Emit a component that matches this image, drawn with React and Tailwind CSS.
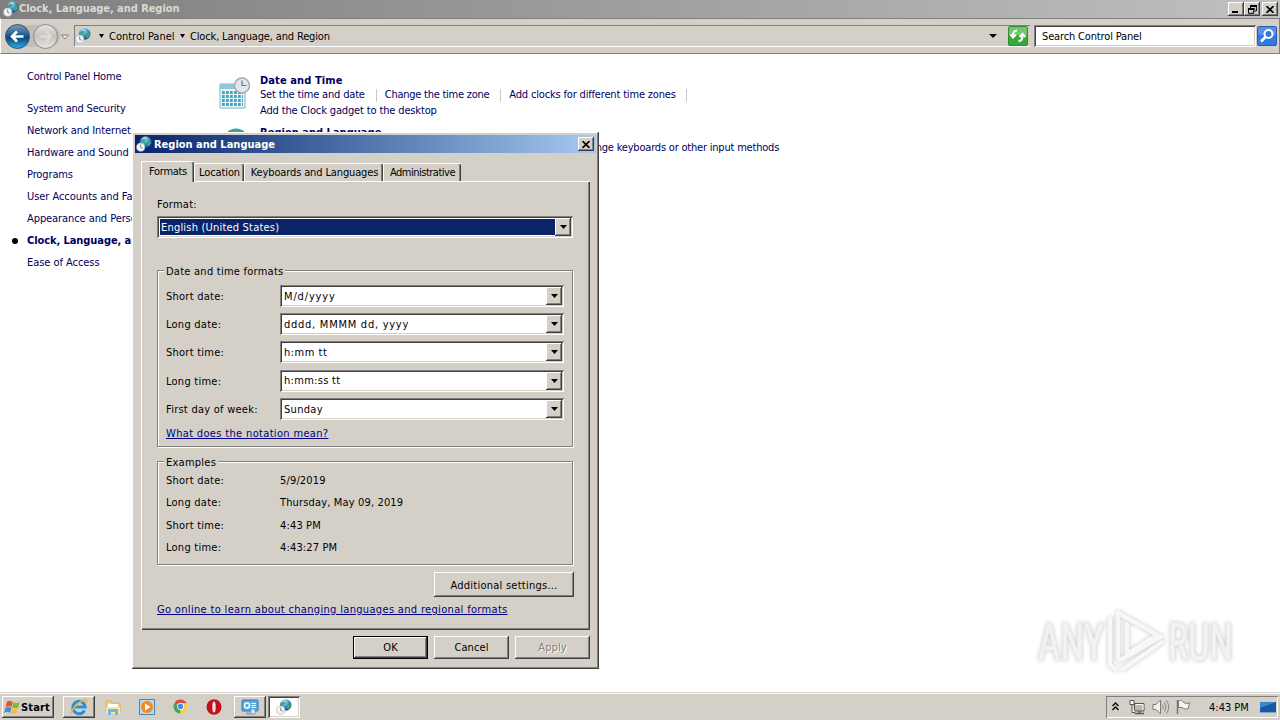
import React from 'react';

const raised =
  'bg-[#d4d0c8] shadow-[inset_-1px_-1px_#404040,inset_1px_1px_#fff,inset_-2px_-2px_#808080]';
const sunken =
  'shadow-[inset_1px_1px_#808080,inset_-1px_-1px_#fff,inset_2px_2px_#404040,inset_-2px_-2px_#d4d0c8]';

const GlobeClock = ({ className = '' }) => (
  <svg viewBox="0 0 16 16" className={`h-4 w-4 shrink-0 ${className}`}>
    <defs>
      <radialGradient id="globe" cx="0.4" cy="0.25" r="0.8">
        <stop offset="0" stopColor="#d5f1f8" />
        <stop offset="0.4" stopColor="#4a9fcf" />
        <stop offset="1" stopColor="#0c3f86" />
      </radialGradient>
    </defs>
    <circle cx="9.7" cy="6" r="5.8" fill="url(#globe)" />
    <path d="M6 3.5l2.500-.7 1.500 1-1.200 1.700-2 .3-1.500 1.500-.3-1.500zM11 6.500l3.600-1.500.3 2.500-2.300 3-1.600-1.500z" fill="#3fa768" />
    <circle cx="4.700" cy="11.200" r="4.100" fill="#f2f5f7" stroke="#a9b6be" strokeWidth="0.700" />
    <path d="M4.700 8.600v2.800l1.900.8" fill="none" stroke="#66747d" strokeWidth="0.900" />
  </svg>
);

const Arrow = ({ className = 'w-[7px]' }) => (
  <svg viewBox="0 0 7 4" preserveAspectRatio="none" className={`h-1 shrink-0 ${className}`}>
    <path d="M0 0h7L3.5 4z" fill="#000" />
  </svg>
);

const CloseGlyph = () => (
  <svg viewBox="0 0 8 7" className="h-[7px] w-2">
    <path d="M.5 0l7 7M7.5 0l-7 7" stroke="#000" strokeWidth="1.6" />
  </svg>
);

const TitleBar = () => (
  <header className="flex h-[18px] items-center bg-linear-to-r from-[#7f7f7f] to-[#c0c0c0] pl-[3px] pr-[2px]">
    <GlobeClock />
    <span className="flex-1 pt-px text-[11px] font-bold tracking-[-0.05px] text-[#dcd9d2]">
      Clock, Language, and Region
    </span>
    <div className="flex items-center">
      <div className={`flex h-[14px] w-4 items-end pb-[3px] pl-1 ${raised}`}>
        <span className="h-[2px] w-[6px] bg-black" />
      </div>
      <div className={`flex h-[14px] w-4 items-center justify-center ${raised}`}>
        <svg viewBox="0 0 9 9" className="h-[9px] w-[9px]">
          <path d="M2.5 3V.9h5.9V6H6.5" fill="none" stroke="#000" />
          <path d="M2 1h7M0 4h6.5" stroke="#000" strokeWidth="1.8" />
          <path d="M.5 3.5h5.2v4.8H.5z" fill="none" stroke="#000" />
        </svg>
      </div>
      <div className={`ml-[2px] flex h-[14px] w-4 items-center justify-center ${raised}`}>
        <CloseGlyph />
      </div>
    </div>
  </header>
);

const NavButtons = () => (
  <svg viewBox="0 0 68 28" className="h-7 w-[68px] shrink-0">
    <defs>
      <linearGradient id="back" x1="0" y1="0" x2="0" y2="1">
        <stop offset="0" stopColor="#7d9cb8" />
        <stop offset="0.45" stopColor="#1f5c93" />
        <stop offset="0.55" stopColor="#0b4780" />
        <stop offset="1" stopColor="#2fb0e6" />
      </linearGradient>
      <linearGradient id="fwd" x1="0" y1="0" x2="0" y2="1">
        <stop offset="0" stopColor="#e6e4e0" />
        <stop offset="0.5" stopColor="#c5c2bd" />
        <stop offset="1" stopColor="#e9e7e3" />
      </linearGradient>
    </defs>
    <rect x="4" y="3" width="54" height="22" rx="11" fill="#c2beb7" />
    <circle cx="15.500" cy="14.500" r="12" fill="url(#back)" stroke="#34516e" />
    <path d="M21.500 14.500h-11M15 9.500l-5 5 5 5" fill="none" stroke="#fff" strokeWidth="2.600" />
    <circle cx="43.500" cy="14.500" r="12" fill="url(#fwd)" stroke="#8d8a86" />
    <path d="M37.500 14.500h11M44 9.500l5 5-5 5" fill="none" stroke="#dedbd6" strokeWidth="2.400" />
    <path d="M59.500 13h7L63 17z" fill="#f5f3f0" stroke="#77746f" strokeWidth="0.900" />
  </svg>
);

const AddressBar = () => (
  <div className="flex h-9 items-center border border-[#808080] border-l-white bg-[#d4d0c8] pr-[2px] pl-[1px] text-[11px]">
    <NavButtons />
    <div className="ml-1 flex h-[22px] flex-1 items-center border-t border-b border-l border-[#808080] border-b-white">
      <GlobeClock className="-mt-px" />
      <Arrow className="ml-2 w-[5px]" />
      <span className="ml-[5px] w-[65px] pt-[2px] whitespace-nowrap">Control Panel</span>
      <Arrow className="ml-[6px] w-[5px]" />
      <span className="ml-[5px] flex-1 pt-[2px] tracking-[-0.15px]">Clock, Language, and Region</span>
      <Arrow className="mr-[11px] w-2" />
      <svg viewBox="0 0 20 20" className="mr-[2px] h-5 w-5">
        <rect x="0.5" y="0.5" width="19" height="19" rx="1.5" fill="#38a838" stroke="#338a35" />
        <rect x="1" y="1" width="18" height="8" fill="#74c56c" />
        <path d="M9 4.500c-3 0-4 2-4 5M2.500 8.500L5 11.500l3-3M10.500 15c3 0 4-2 4-5M11.500 11l3-3 3 3" fill="none" stroke="#fff" strokeWidth="2" />
      </svg>
    </div>
    <div className={`ml-1 flex h-[22px] w-[222px] items-center bg-white pt-[2px] pl-2 tracking-[-0.15px] ${sunken}`}>
      <span>Search Control Panel</span>
    </div>
    <svg viewBox="0 0 20 20" className="ml-[1px] h-5 w-5">
      <rect x="0.500" y="0.500" width="19" height="19" rx="1.500" fill="#2f7be0" stroke="#2b5cae" />
      <rect x="1" y="1" width="18" height="8" fill="#5a8ee8" />
      <circle cx="11.500" cy="8" r="4" fill="#3c78d8" stroke="#fff" strokeWidth="2" />
      <path d="M8.500 11L4 15.500" stroke="#fff" strokeWidth="2.600" />
    </svg>
  </div>
);

const Sidebar = () => (
  <nav className="w-[218px] pt-3 pl-[27px] text-[11px] leading-[22px] tracking-[-0.2px] whitespace-nowrap text-[#00005f]">
    <div>Control Panel Home</div>
    <ul className="mt-[10px]">
      <li>System and Security</li>
      <li className="tracking-[-0.08px]">Network and Internet</li>
      <li className="tracking-[-0.12px]">Hardware and Sound</li>
      <li className="tracking-[-0.12px]">Programs</li>
      <li className="tracking-[-0.05px]">User Accounts and Family Safety</li>
      <li className="tracking-[-0.08px]">Appearance and Personalization</li>
      <li className="-ml-[15px] flex items-center font-bold tracking-[-0.08px]">
        <span className="mr-[9px] h-[6px] w-[6px] rounded-full bg-black" />
        Clock, Language, and Region
      </li>
      <li className="tracking-[-0.05px]">Ease of Access</li>
    </ul>
  </nav>
);

const Calendar = () => (
  <svg viewBox="0 0 32 32" className="h-8 w-8 shrink-0">
    <path d="M1 7h25v24H1z" fill="#eef8fb" stroke="#79b4c8" />
    <path d="M1 7h25v5H1z" fill="#8fcadb" />
    <path d="M3 15.500h21M3 19.500h21M3 23.500h21M3 27.500h21" stroke="#43a5c6" strokeWidth="2.800" strokeDasharray="2.800 1.200" />
    <circle cx="23" cy="8.500" r="7.500" fill="#e3e7ea" stroke="#a2aab0" strokeWidth="1.500" />
    <path d="M23 3.500v5h4.500" fill="none" stroke="#6c7780" strokeWidth="1.200" />
  </svg>
);

const Sep = ({ className = '' }) => <span className={`h-[13px] w-px bg-[#c8c8c8] ${className}`} />;

const Content = () => (
  <section className="pt-5 text-[11px] tracking-[-0.17px] whitespace-nowrap text-[#00005f]">
    <div className="flex">
      <div className="w-[42px] pt-[3px] pl-[1px]">
        <Calendar />
      </div>
      <div>
        <h2 className="h-[14px] leading-[14px] font-bold tracking-[0.1px]">Date and Time</h2>
        <div className="flex h-[14px] items-center">
          <span>Set the time and date</span>
          <Sep className="mr-2 ml-[11px]" />
          <span className="tracking-[-0.25px]">Change the time zone</span>
          <Sep className="mr-2 ml-[11px]" />
          <span>Add clocks for different time zones</span>
          <Sep className="ml-[10px]" />
        </div>
        <div className="h-[18px] leading-[18px] tracking-[-0.14px]">Add the Clock gadget to the desktop</div>
      </div>
    </div>
    <div className="mt-[6px] flex">
      <div className="w-[42px] pt-[2px] pl-[5px]">
        <svg viewBox="0 0 26 26" className="h-[26px] w-[26px]">
          <circle cx="13" cy="13" r="12.500" fill="#3b9dab" />
          <path d="M6 5l8-4 3 3-4 5-6 1z" fill="#4aa96c" />
        </svg>
      </div>
      <div>
        <h2 className="h-[14px] leading-[14px] font-bold tracking-[0.02px]">Region and Language</h2>
        <div className="flex h-[17px] items-center tracking-[-0.2px]">
          <span className="w-[317px]">Install or uninstall display languages</span>
          <span>Change keyboards or other input methods</span>
        </div>
      </div>
    </div>
  </section>
);

const Combo = ({ value, selected, className = '', textClass = '' }) => (
  <div className={`flex bg-white p-[2px] ${sunken} ${className}`}>
    <span
      className={`flex flex-1 items-center ${selected ? 'm-px mr-0 bg-[#0a246a] pt-[2px] pl-px text-white' : 'pt-[2px] pl-[2px]'} ${textClass}`}
    >
      {value}
    </span>
    <span className={`flex w-4 items-center justify-center ${raised}`}>
      <Arrow />
    </span>
  </div>
);

const formats = [
  ['Short date:', 'M/d/yyyy', 'tracking-[0.85px]'],
  ['Long date:', 'dddd, MMMM dd, yyyy', 'tracking-[0.74px]'],
  ['Short time:', 'h:mm tt', 'tracking-[0.5px]'],
  ['Long time:', 'h:mm:ss tt', 'tracking-[0.3px]'],
  ['First day of week:', 'Sunday', 'tracking-[0.3px]'],
];

const examples = [
  ['Short date:', '5/9/2019'],
  ['Long date:', 'Thursday, May 09, 2019'],
  ['Short time:', '4:43 PM'],
  ['Long time:', '4:43:27 PM'],
];

const Group = ({ title, className, children }) => (
  <div className={`border border-[#808080] shadow-[1px_1px_#fff,inset_1px_1px_#fff] ${className}`}>
    <div className="-mt-[7px] ml-[6px] h-[14px] w-fit bg-[#d4d0c8] px-[2px] leading-[16px]">{title}</div>
    {children}
  </div>
);

const Tab = ({ className = '', children }) => (
  <div
    className={`flex h-[18px] items-center justify-center rounded-t-[2px] border-t border-l border-white shadow-[inset_-1px_0_#404040,inset_-2px_0_#808080] ${className}`}
  >
    {children}
  </div>
);

const Button = ({ className = '', children }) => (
  <div className={`flex items-center justify-center ${raised} ${className}`}>{children}</div>
);

const RegionDialog = () => (
  <div
    className={`absolute top-[132px] left-[132px] h-[537px] w-[467px] p-[3px] text-[11px] tracking-[0.25px] whitespace-nowrap text-black ${raised}`}
  >
    <div className="flex h-[18px] items-center bg-linear-to-r from-[#0a246a] to-[#a6caf0] pr-[2px] pl-[1px]">
      <GlobeClock />
      <span className="ml-[2px] flex-1 pt-[2px] font-bold tracking-normal text-white">Region and Language</span>
      <Button className="h-[14px] w-4">
        <CloseGlyph />
      </Button>
    </div>

    <div className="mt-[8px] ml-[6px] flex h-5 items-end">
      <Tab className="z-10 -mb-px h-[21px] w-[53px] bg-[#d4d0c8] tracking-[-0.3px]">Formats</Tab>
      <Tab className="w-[50px] pt-[2px] tracking-[-0.1px]">Location</Tab>
      <Tab className="w-[139px] pt-[2px] pl-px tracking-[-0.13px]">Keyboards and Languages</Tab>
      <Tab className="w-[78px] pt-[2px] tracking-[-0.5px]">Administrative</Tab>
    </div>

    <div className="ml-[6px] h-[449px] w-[449px] px-4 pt-[17px] shadow-[inset_1px_1px_#fff,inset_-1px_-1px_#404040,inset_-2px_-2px_#808080]">
      <div className="leading-[14px]">Format:</div>
      <Combo className="mt-1 h-[22px] w-[416px]" value="English (United States)" textClass="tracking-[0.2px]" selected />

      <Group title="Date and time formats" className="mt-8 h-[177px] w-[416px]">
        <div className="mt-[7px] pl-2">
          {formats.map(([label, value, textClass]) => (
            <div key={label} className="flex h-[28.2px]">
              <span className="w-[114px] pt-[5px] leading-[14px]">{label}</span>
              <Combo className="h-[22px] w-[284px]" value={value} textClass={textClass} />
            </div>
          ))}
        </div>
        <a className="mt-px ml-2 block w-fit leading-[14px] tracking-[0.34px] text-[#000080] underline">
          What does the notation mean?
        </a>
      </Group>

      <Group title="Examples" className="mt-[14px] h-[104px] w-[416px]">
        <div className="pl-2">
          {examples.map(([label, value]) => (
            <div key={label} className="flex h-[22.4px] items-center pt-[2px]">
              <span className="w-[114px]">{label}</span>
              <span className="tracking-[0.15px]">{value}</span>
            </div>
          ))}
        </div>
      </Group>

      <Button className="mt-[7px] ml-auto h-[25px] w-[140px] pt-[3px]">Additional settings...</Button>
      <a className="mt-[6px] block w-fit leading-[14px] tracking-[0.33px] text-[#000080] underline">
        Go online to learn about changing languages and regional formats
      </a>
    </div>

    <div className="mt-[6px] mr-[6px] flex justify-end gap-[6px] tracking-[0.1px]">
      <div className="border border-black">
        <Button className="h-[21px] w-[73px] pt-px">OK</Button>
      </div>
      <Button className="h-[23px] w-[75px] pt-px">Cancel</Button>
      <Button className="h-[23px] w-[75px] pt-px text-[#808080] [text-shadow:1px_1px_#fff]">Apply</Button>
    </div>
  </div>
);

const Watermark = () => (
  <svg viewBox="0 0 230 80" className="absolute top-[605px] left-[1030px] h-20 w-[230px] overflow-visible">
    <g
      className="[filter:drop-shadow(0_0_2px_#c4c4c4)]"
      fill="#f3f3f3"
      stroke="#efefef"
      strokeWidth="1.2"
      fontFamily="Roboto, sans-serif"
      fontSize="52"
    >
      <text x="8" y="55" textLength="66" lengthAdjust="spacingAndGlyphs">ANY</text>
      <text x="138" y="55" textLength="65" lengthAdjust="spacingAndGlyphs">RUN</text>
    </g>
    <g
      className="[filter:drop-shadow(0_0_2px_#c4c4c4)]"
      fill="none"
      stroke="#f7f7f7"
      strokeWidth="4.500"
      strokeLinejoin="round"
      strokeLinecap="round"
    >
      <path d="M88 53V8l43 24-41 23M80 14v46l5 4M97 19v30l27-17M132 37L93 64" />
    </g>
  </svg>
);

const Ie = () => (
  <svg viewBox="0 0 18 18" className="h-[18px] w-[18px]">
    <path d="M14.500 12.500A6.200 6.200 0 1 1 15.200 9H5" fill="none" stroke="#2d8fd8" strokeWidth="3" />
    <path d="M1.500 16c-2-3 9-14 14-14.500 2 0 1.500 2 .5 3.500" fill="none" stroke="#e9b93a" strokeWidth="1.500" />
  </svg>
);

const Folder = () => (
  <svg viewBox="0 0 18 18" className="h-[18px] w-[18px]">
    <path d="M2 3h5l1 2h8v10H2z" fill="#f0d67c" stroke="#cfae54" strokeWidth="0.800" />
    <path d="M4 6h10v4H4z" fill="#fff" />
    <path d="M2 9h14v7H2z" fill="#f7e5a0" />
    <path d="M4 17v-6h10v6h-3v-3H7v3z" fill="#6fb7e2" />
  </svg>
);

const Player = () => (
  <svg viewBox="0 0 18 18" className="h-[18px] w-[18px]">
    <path d="M1.500 1.500h15v15h-15z" fill="#b7d9f2" stroke="#4785bd" />
    <circle cx="9" cy="9" r="6" fill="#f08a1c" />
    <path d="M7 5.500l5.500 3.500L7 12.500z" fill="#fff" />
  </svg>
);

const Chrome = () => (
  <svg viewBox="0 0 16 16" className="h-[15px] w-[15px]">
    <path d="M8 8L1.500 4.200A7.500 7.500 0 0 1 14.600 4.500H8z" fill="#df4b3c" />
    <path d="M8 8l6.600-3.500A7.500 7.500 0 0 1 7.600 15.500z" fill="#f8ce45" />
    <path d="M8 8l-.4 7.500A7.500 7.500 0 0 1 1.500 4.200z" fill="#47a457" />
    <circle cx="8" cy="8" r="3.700" fill="#fff" />
    <circle cx="8" cy="8" r="2.900" fill="#4a8af4" />
  </svg>
);

const Opera = () => (
  <svg viewBox="0 0 16 16" className="h-4 w-4">
    <ellipse cx="8" cy="8" rx="7.500" ry="7.800" fill="#c1121c" />
    <ellipse cx="8" cy="8" rx="1.700" ry="5.500" fill="#f3e4e2" />
  </svg>
);

const ControlPanel = () => (
  <svg viewBox="0 0 18 18" className="h-[18px] w-[18px]">
    <rect x="1" y="2" width="16" height="11" rx="1" fill="#5aaae0" stroke="#3673ad" />
    <circle cx="6" cy="7.500" r="2.500" fill="none" stroke="#fff" strokeWidth="1.400" />
    <path d="M10.500 5.500H15M10.500 7.500H15M10.500 9.500H15" stroke="#fff" />
    <path d="M5 15.500h7" stroke="#90a7b8" strokeWidth="2" />
    <path d="M10 11h4v5h-4z" fill="#dcecf6" stroke="#5889ad" strokeWidth="0.700" />
  </svg>
);

const Flag = () => (
  <svg viewBox="0 0 18 18" className="h-[18px] w-[17px]">
    <path d="M3 3.500c2-2 4-1 6.300 0L8 9C6 8 4 8 1.800 9z" fill="#e4572e" />
    <path d="M10 4c2 1 4 1 6.500 0L15 9.400c-2 1-4 1-6.300 0z" fill="#7db93f" />
    <path d="M1.600 9.700c2-1 4-1 6.200 0L6.400 15c-2-1-4-1-6.200 0z" fill="#3d8fd6" />
    <path d="M8.500 10c2 1 4 1 6.300 0l-1.300 5.500c-2 1-4 1-6.300 0z" fill="#f5c03a" />
  </svg>
);

const Tray = () => (
  <div className="flex h-[22px] w-[172px] items-center pl-[6px] shadow-[inset_1px_1px_#808080,inset_-1px_-1px_#fff]">
    <svg viewBox="0 0 7 9" className="h-[9px] w-[7px]">
      <path d="M.5 4l3-3 3 3M.5 8l3-3 3 3" fill="none" stroke="#000" strokeWidth="1.300" />
    </svg>
    <svg viewBox="0 0 16 16" className="ml-[10px] h-4 w-4">
      <path d="M5.500 4.500h9.500v7.500H5.500z" fill="#bbb8b2" stroke="#555" />
      <path d="M6.500 5.500h7.500v5.500" fill="none" stroke="#fff" />
      <path d="M6 14.500h9M10.500 12v2" stroke="#555" strokeWidth="1.500" />
      <path d="M1 1.500h4v4H1zM3 6v7.500h3" fill="#fff" stroke="#555" />
    </svg>
    <svg viewBox="0 0 18 16" className="ml-[7px] h-4 w-[18px]">
      <path d="M1 5.500h3L8.500 1v14L4 10.500H1z" fill="#f4f2ee" stroke="#777" />
      <path d="M10.500 5.500q1.500 2.500 0 5M12.500 3.500q3 4.500 0 9M14.500 1.500q4.500 6.500 0 13" fill="none" stroke="#888" />
    </svg>
    <svg viewBox="0 0 17 16" className="ml-[5px] h-4 w-[17px]">
      <path d="M2.500 1v14" stroke="#777" strokeWidth="1.500" />
      <path d="M3.500 2c3-1.500 4 0 5 1.500 2 1 4 1 6.500.5-1 1.500-1.500 3-1.500 5.500-3 1-5 .5-6-1h-4z" fill="#f6f5f2" stroke="#777" />
    </svg>
    <span className="ml-[17px] w-[41px] pt-[3px] whitespace-nowrap">4:43 PM</span>
    <svg viewBox="0 0 16 14" className="ml-[10px] h-[14px] w-4">
      <path d="M0 2h16v10H0z" fill="#1857a4" />
      <path d="M0 2h16L0 8z" fill="#3c85cf" />
      <path d="M0 12.500h16" stroke="#74a8d6" />
    </svg>
  </div>
);

const Taskbar = () => (
  <footer className="flex h-7 items-center border-t border-[#d4d0c8] bg-[#d4d0c8] pr-[2px] pl-[2px] text-[11px] shadow-[inset_0_1px_#fff]">
    <Button className="h-[22px] w-[52px] pr-[2px]">
      <Flag />
      <span className="pt-[3px] font-bold tracking-[0.15px]">Start</span>
    </Button>
    <Button className="ml-[9px] h-[22px] w-8">
      <Ie />
    </Button>
    <div className="ml-[9px] flex items-center">
      <Folder />
      <span className="w-[16px]" />
      <Player />
      <span className="w-[17px]" />
      <Chrome />
      <span className="w-[18px]" />
      <Opera />
    </div>
    <Button className="ml-3 h-[22px] w-8">
      <ControlPanel />
    </Button>
    <div className={`ml-[2px] flex h-[22px] w-8 items-center justify-center bg-white ${sunken}`}>
      <GlobeClock />
    </div>
    <div className="ml-auto">
      <Tray />
    </div>
  </footer>
);

const App = () => {
  return (
    <div className="relative flex h-[720px] w-[1280px] flex-col overflow-hidden bg-white font-['DejaVu_Sans_Condensed','DejaVu_Sans',sans-serif] text-black [font-stretch:condensed]">
      <TitleBar />
      <AddressBar />
      <main className="flex min-h-0 flex-1">
        <Sidebar />
        <Content />
      </main>
      <Watermark />
      <Taskbar />
      <RegionDialog />
    </div>
  );
};

export default App;
